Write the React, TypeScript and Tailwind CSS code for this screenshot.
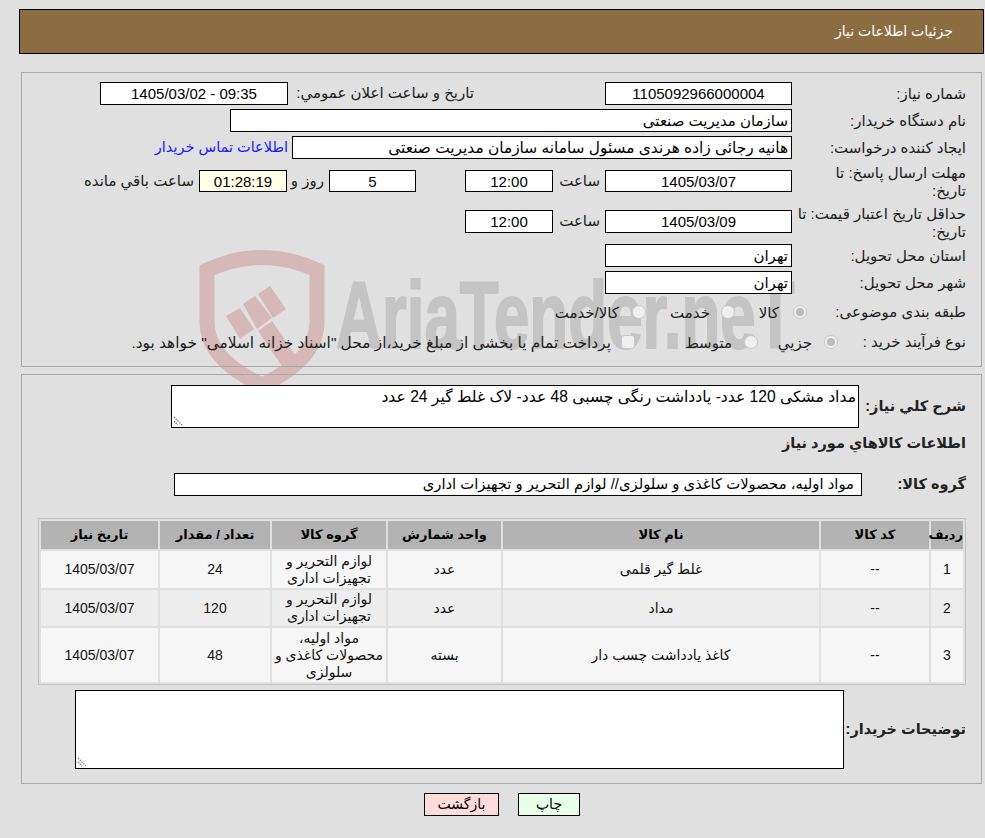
const INPUT = 'border border-black bg-white h-[23px] text-[15px] leading-[21px] text-black'
const TEXT = 'text-[15px] text-[#222]'
const BOLD = 'text-[14.5px] font-bold whitespace-nowrap text-[#222]'

const Row = ({ label, top, children }: { label: React.ReactNode; top: string; children: React.ReactNode }) => (
  <div className={`flex ${top}`}>
    <div className="w-[174px] shrink-0 pl-[2px] text-[15px] leading-[18px] text-[#222]">{label}</div>
    {children}
  </div>
)

const Radio = ({ checked, square }: { checked?: boolean; square?: boolean }) => (
  <span className={`flex h-[14px] w-[14px] shrink-0 items-center justify-center border border-[#c8c8c8] bg-[#efefef] ${square ? 'rounded-[3px]' : 'rounded-full'}`}>
    {checked && <span className="h-[8px] w-[8px] rounded-full bg-[#bcbcbc]" />}
  </span>
)

const Grip = () => (
  <svg className="absolute bottom-[1px] left-[1px]" width="10" height="10" viewBox="0 0 10 10">
    <path d="M1 1l8 8M1 5l4 4" stroke="#777" strokeWidth="1.2" strokeDasharray="1.5 1" fill="none" />
  </svg>
)

const ITEMS = [
  { n: '1', code: '--', name: 'غلط گیر قلمی', unit: 'عدد', group: ['لوازم التحریر و', 'تجهیزات اداری'], qty: '24', date: '1405/03/07', cls: 'h-[37px] bg-[#f6f6f6]' },
  { n: '2', code: '--', name: 'مداد', unit: 'عدد', group: ['لوازم التحریر و', 'تجهیزات اداری'], qty: '120', date: '1405/03/07', cls: 'h-[36px] bg-[#ededed]' },
  { n: '3', code: '--', name: 'کاغذ یادداشت چسب دار', unit: 'بسته', group: ['مواد اولیه،', 'محصولات کاغذی و', 'سلولزی'], qty: '48', date: '1405/03/07', cls: 'h-[54px] bg-[#f6f6f6]' },
]

const TH = 'bg-[#b3b3b3] p-0 text-[13px] font-bold text-black h-[28px]'
const TD = 'p-0 text-center text-[14px] leading-[17px] text-[#111]'

export default function App() {
  return (
    <div dir="rtl" className="relative h-[838px] w-[985px] overflow-hidden bg-[#e0e0e0] font-['Liberation_Sans','DejaVu_Sans',sans-serif]">
      {/* Watermark */}
      <svg className="absolute left-[190px] top-[240px]" width="150" height="160" viewBox="190 240 150 160">
        <path d="M207 270Q262 245 317 270V322C317 352 290 372 262 385C234 372 207 352 207 322Z" fill="none" stroke="#d6b8b9" strokeWidth="15" />
        <g fill="#d6b8b9">
          <path d="M226 316L240 308L254 329L240 339Z" />
          <path d="M243 304L255 296L272 318L257 329Z" />
          <path d="M258 294L270 286L286 309L273 318Z" />
          <path d="M258 331L272 321L300 362L286 372Z" />
        </g>
      </svg>
      <span dir="ltr" className="absolute left-[336px] top-[268px] origin-top-left scale-x-[0.67] whitespace-nowrap text-[95px] font-bold leading-[95px] text-[#c4c4c4] [-webkit-text-stroke:2px_#c4c4c4]">
        AriaTender.neT
      </span>

      <div className="relative pt-[9px]">
        {/* Title */}
        <div className="ml-[19px] mr-[1px] flex h-[45px] items-center border border-black bg-[#8c6d42] pr-[30px] text-[14px] text-white">
          جزئیات اطلاعات نیاز
        </div>

        {/* Main info */}
        <div className="ml-[21px] mr-[3px] mt-[18px] h-[295px] border border-[#a9a9a9] pr-[15px] pt-[9px]">
          <Row label="شماره نیاز:" top="items-center">
            <div className={`${INPUT} w-[187px] text-center`}>1105092966000004</div>
            <div className="w-[131px]" />
            <div className={`${TEXT} w-[186px] whitespace-nowrap`}>تاریخ و ساعت اعلان عمومي:</div>
            <div dir="ltr" className={`${INPUT} w-[188px] text-center`}>1405/03/02 - 09:35</div>
          </Row>
          <Row label="نام دستگاه خریدار:" top="mt-[4px] items-center">
            <div className={`${INPUT} w-[562px] pr-[3px]`}>سازمان مدیریت صنعتی</div>
          </Row>
          <Row label="ایجاد کننده درخواست:" top="mt-[4px] items-center">
            <div className={`${INPUT} w-[500px] pr-[3px] !text-[15.4px]`}>هانیه رجائی زاده هرندی مسئول سامانه سازمان مدیریت صنعتی</div>
            <a className="mr-[4px] text-[14.5px] text-[#1a1aff]">اطلاعات تماس خریدار</a>
          </Row>
          <Row label={<>مهلت ارسال پاسخ: تا<br />تاریخ:</>} top="mt-[5px] h-[36px]">
            <div className="mt-[6px] flex h-[22px] items-center">
              <div className={`${INPUT} !h-[22px] w-[187px] text-center`}>1405/03/07</div>
              <div className={`${TEXT} w-[52px] pr-[5px]`}>ساعت</div>
              <div className={`${INPUT} !h-[22px] w-[88px] text-center`}>12:00</div>
              <div className="w-[49px]" />
              <div className={`${INPUT} !h-[22px] w-[87px] text-center`}>5</div>
              <div className={`${TEXT} w-[42px] pr-[5px]`}>روز و</div>
              <div className={`${INPUT} !h-[22px] w-[88px] !bg-[#ffffe8] text-center`}>01:28:19</div>
              <div className={`${TEXT} whitespace-nowrap pr-[5px]`}>ساعت باقي مانده</div>
            </div>
          </Row>
          <Row label={<>حداقل تاریخ اعتبار قیمت: تا<br />تاریخ:</>} top="mt-[5px] h-[36px]">
            <div className="mt-[5px] flex h-[23px] items-center">
              <div className={`${INPUT} w-[187px] text-center`}>1405/03/09</div>
              <div className={`${TEXT} w-[52px] pr-[5px]`}>ساعت</div>
              <div className={`${INPUT} w-[88px] text-center`}>12:00</div>
            </div>
          </Row>
          <Row label="استان محل تحویل:" top="mt-[3px] items-center">
            <div className={`${INPUT} w-[187px] pr-[3px]`}>تهران</div>
          </Row>
          <Row label="شهر محل تحویل:" top="mt-[4px] items-center">
            <div className={`${INPUT} w-[187px] pr-[3px]`}>تهران</div>
          </Row>
          <Row label="طبقه بندی موضوعی:" top="mt-[6px] h-[24px] items-center">
            <div className={`${TEXT} mr-[-15px] flex items-center`}>
              <Radio checked />
              <span className="mr-[14px] w-[44px] pt-[3px]">کالا</span>
              <Radio />
              <span className="mr-[11px] w-[64px] pt-[3px]">خدمت</span>
              <Radio />
              <span className="mr-[13px] whitespace-nowrap pt-[3px]">کالا/خدمت</span>
            </div>
          </Row>
          <Row label="نوع فرآیند خرید :" top="mt-[6px] h-[24px] items-center">
            <div className={`${TEXT} mr-[-46px] flex items-center`}>
              <Radio checked />
              <span className="mr-[12px] w-[54px] pt-[2px]">جزیي</span>
              <Radio />
              <span className="mr-[12px] w-[97px] pt-[2px]">متوسط</span>
              <Radio square />
              <span className="mr-[10px] whitespace-nowrap pt-[2px] text-[15.4px]">پرداخت تمام یا بخشی از مبلغ خرید،از محل "اسناد خزانه اسلامی" خواهد بود.</span>
            </div>
          </Row>
        </div>

        {/* Description and items */}
        <div className="ml-[21px] mr-[3px] mt-[7px] h-[410px] border border-[#a9a9a9] pr-[15px] pt-[10px]">
          <div className="flex items-center">
            <div className={`${BOLD} w-[107px] shrink-0`}>شرح کلي نیاز:</div>
            <div className="relative h-[43px] w-[688px] border border-black bg-white px-[2px] text-[15.6px] leading-[22px] text-black">
              مداد مشکی 120 عدد- یادداشت رنگی چسبی 48 عدد- لاک غلط گیر 24 عدد
              <Grip />
            </div>
          </div>
          <div className={`${BOLD} h-[30px] leading-[30px]`}>اطلاعات کالاهاي مورد نیاز</div>
          <div className="mt-[15px] flex items-center">
            <div className={`${BOLD} w-[104px] shrink-0`}>گروه کالا:</div>
            <div className={`${INPUT} w-[688px] pr-[7px] !text-[14.8px]`}>مواد اولیه، محصولات کاغذی و سلولزی// لوازم التحریر و تجهیزات اداری</div>
          </div>

          <table className="mt-[22px] w-[928px] table-fixed border-separate border-spacing-[2px] border border-[#c2c2c2]">
            <colgroup>
              <col className="w-[32px]" />
              <col className="w-[108px]" />
              <col className="w-[316px]" />
              <col className="w-[113px]" />
              <col className="w-[114px]" />
              <col className="w-[110px]" />
              <col className="w-[117px]" />
            </colgroup>
            <thead>
              <tr>
                {['ردیف', 'کد کالا', 'نام کالا', 'واحد شمارش', 'گروه کالا', 'تعداد / مقدار', 'تاریخ نیاز'].map((h) => (
                  <th key={h} className={TH}>{h}</th>
                ))}
              </tr>
            </thead>
            <tbody>
              {ITEMS.map((r) => (
                <tr key={r.n} className={r.cls}>
                  <td className={TD}>{r.n}</td>
                  <td className={TD}>{r.code}</td>
                  <td className={TD}>{r.name}</td>
                  <td className={TD}>{r.unit}</td>
                  <td className={TD}>{r.group.map((g) => <div key={g}>{g}</div>)}</td>
                  <td className={TD}>{r.qty}</td>
                  <td className={TD}>{r.date}</td>
                </tr>
              ))}
            </tbody>
          </table>

          <div className="mt-[5px] flex items-center">
            <div className={`${BOLD} w-[122px] shrink-0`}>توضیحات خریدار:</div>
            <div className="relative h-[79px] w-[769px] border border-black bg-white">
              <Grip />
            </div>
          </div>
        </div>

        {/* Actions */}
        <div className="mt-[9px] flex justify-center gap-[19px] pl-[19px]">
          <button className="h-[23px] w-[62px] border border-black bg-[#e8ffe8] text-[14px] text-black">چاپ</button>
          <button className="h-[23px] w-[75px] border border-black bg-[#ffdcdc] text-[14px] text-black">بازگشت</button>
        </div>
      </div>
    </div>
  )
}
